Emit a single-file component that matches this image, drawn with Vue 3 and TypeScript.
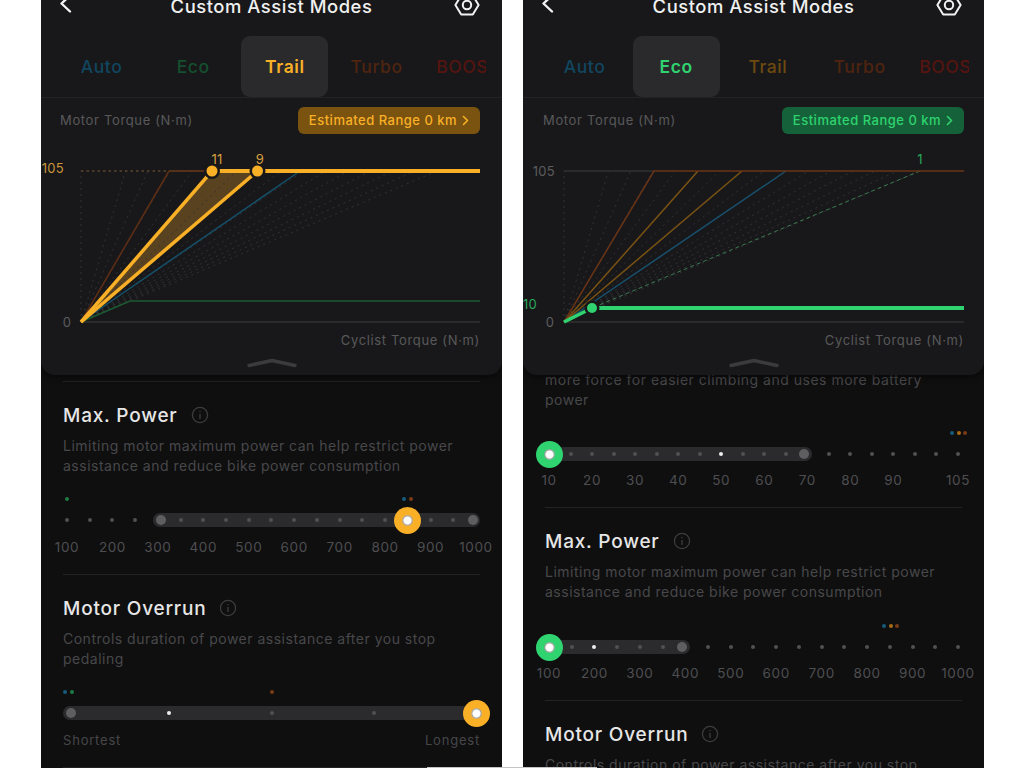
<script setup lang="ts">
interface Seg { d: string; color: string; w: number; dash?: string }
interface Label { t: string; x: number; y: number; color: string; anchor: string; size?: number }
interface Knob { x: number; y: number; r: number }
interface Marker { idx: number; off: number; color: string }
interface Tick { t: string; idx: number }
interface Slider {
  dots: number; a: number; b: number; thumb: number; white: number | null;
  markers: Marker[]; ticks?: Tick[]; ends?: [string, string];
}
interface Section { title?: string; desc: string[]; slider: Slider }
interface Phone {
  tab: number; accent: string; pillBg: string; fill: string; fillPts: string;
  segs: Seg[]; labels: Label[]; knobs: Knob[]; knobColor: string;
  origin: number; sections: Section[]; partial: boolean;
}

const BLUE = '#175a7c', GREEN = '#1f7a45', ORANGE = '#a86a14', RED = '#7a3a18'
const tabs = [
  { n: 'Auto', c: '#11465f' }, { n: 'Eco', c: '#14502f' }, { n: 'Trail', c: '#6e4a10' },
  { n: 'Turbo', c: '#4f2410' }, { n: 'BOOST', c: '#561410' },
]
const powerTicks: Tick[] = ['100', '200', '300', '400', '500', '600', '700', '800', '900', '1000'].map((t, i) => ({ t, idx: i * 2 }))
const torqueTicks: Tick[] = [
  ...['10', '20', '30', '40', '50', '60', '70', '80', '90'].map((t, i) => ({ t, idx: i * 2 })),
  { t: '105', idx: 19 },
]
const powerTitle = 'Max. Power'
const powerDesc = ['Limiting motor maximum power can help restrict power', 'assistance and reduce bike power consumption']
const overrunDesc = ['Controls duration of power assistance after you stop', 'pedaling']

const line = (x1: number, y1: number, x2: number, y2: number) => `M${x1} ${y1}L${x2} ${y2}`
const fan = (o: number): Seg[] =>
  Array.from({ length: 17 }, (_, k) => k)
    .filter((k) => k !== 1)
    .map((k) => ({ d: line(o, 322, o + 22.25 * k, 171), color: '#323234', w: 1, dash: '2 4' }))

const phones: Phone[] = [
  {
    tab: 2, accent: '#f9b027', pillBg: '#7a5310', fill: '#59421f', origin: 40,
    fillPts: '40,322 171,171 216.5,171', knobColor: '#f9b027', partial: false,
    segs: [
      ...fan(40),
      { d: line(40, 171, 128, 171), color: '#7a5a34', w: 1.2, dash: '2.5 3' },
      { d: line(128, 171, 171, 171), color: '#6a3a1a', w: 1.5 },
      { d: line(40, 322, 439, 322), color: '#303032', w: 1.5 },
      { d: line(40, 322, 128, 171), color: '#5e2e14', w: 1.5 },
      { d: line(40, 322, 259, 171), color: '#15506a', w: 1.5 },
      { d: 'M40 322L89 301L439 301', color: '#1c5a32', w: 1.5 },
      { d: line(40, 322, 171, 171), color: '#f9b027', w: 3.5 },
      { d: line(40, 322, 216.5, 171), color: '#f9b027', w: 3.5 },
      { d: line(171, 171, 439, 171), color: '#f9b027', w: 4 },
    ],
    knobs: [{ x: 171, y: 171, r: 5.5 }, { x: 216.5, y: 171, r: 5.5 }],
    labels: [
      { t: '105', x: 23, y: 168, color: '#c9963a', anchor: 'end' },
      { t: '0', x: 26, y: 322, color: '#5c5c5e', anchor: 'middle' },
      { t: '11', x: 176, y: 159, color: '#d8a040', anchor: 'middle' },
      { t: '9', x: 219, y: 159, color: '#d8a040', anchor: 'middle' },
    ],
    sections: [
      {
        title: powerTitle, desc: powerDesc,
        slider: {
          dots: 19, a: 4, b: 18, thumb: 15, white: null, ticks: powerTicks,
          markers: [{ idx: 0, off: 0, color: GREEN }, { idx: 15, off: -3.5, color: BLUE }, { idx: 15, off: 3.5, color: RED }],
        },
      },
      {
        title: 'Motor Overrun', desc: overrunDesc,
        slider: {
          dots: 5, a: 0, b: 4, thumb: 4, white: 1, ends: ['Shortest', 'Longest'],
          markers: [{ idx: 0, off: -2, color: BLUE }, { idx: 0, off: 5, color: GREEN }, { idx: 2, off: 0, color: RED }],
        },
      },
    ],
  },
  {
    tab: 1, accent: '#2fd36f', pillBg: '#15623a', fill: 'none', origin: 41,
    fillPts: '', knobColor: '#2fd36f', partial: true,
    segs: [
      ...fan(41),
      { d: line(41, 171, 131, 171), color: '#303032', w: 1.5 },
      { d: line(41, 322, 441, 322), color: '#303032', w: 1.5 },
      { d: line(397, 171, 69, 308), color: '#3a7a52', w: 1, dash: '4 3' },
      { d: line(41, 322, 263, 171), color: '#17506e', w: 1.5 },
      { d: line(41, 322, 219, 171), color: '#7a5212', w: 1.5 },
      { d: line(41, 322, 175, 171), color: '#7a5212', w: 1.5 },
      { d: 'M41 322L131 171L441 171', color: '#6a3316', w: 1.5 },
      { d: line(41, 322, 69, 308), color: '#2fd36f', w: 3.5 },
      { d: line(69, 308, 441, 308), color: '#2fd36f', w: 4 },
    ],
    knobs: [{ x: 69, y: 308, r: 5 }],
    labels: [
      { t: '105', x: 32, y: 171, color: '#5c5c5e', anchor: 'end' },
      { t: '0', x: 27, y: 322, color: '#5c5c5e', anchor: 'middle' },
      { t: '10', x: 7, y: 304, color: '#2aa85c', anchor: 'middle' },
      { t: '1', x: 397, y: 159, color: '#2aa85c', anchor: 'middle' },
    ],
    sections: [
      {
        desc: ['more force for easier climbing and uses more battery', 'power'],
        slider: {
          dots: 20, a: 0, b: 12, thumb: 0, white: 8, ticks: torqueTicks,
          markers: [{ idx: 19, off: -6, color: BLUE }, { idx: 19, off: 1, color: ORANGE }, { idx: 19, off: 7, color: RED }],
        },
      },
      {
        title: powerTitle, desc: powerDesc,
        slider: {
          dots: 19, a: 0, b: 6, thumb: 0, white: 2, ticks: powerTicks,
          markers: [{ idx: 15, off: -6, color: BLUE }, { idx: 15, off: 1, color: ORANGE }, { idx: 15, off: 7, color: RED }],
        },
      },
      {
        title: 'Motor Overrun', desc: overrunDesc,
        slider: {
          dots: 5, a: 0, b: 2, thumb: 0, white: 1, ends: ['Shortest', 'Longest'],
          markers: [],
        },
      },
    ],
  },
]

const SCALE = 409
const pos = (s: Slider, i: number) => (i / (s.dots - 1)) * SCALE
const trackStyle = (s: Slider) => ({ left: `${pos(s, s.a) - 4.5}px`, width: `${pos(s, s.b) - pos(s, s.a) + 9}px` })
const dotClass = (s: Slider, i: number) => ({
  white: i === s.white,
  hidden: i === s.thumb || ((i === s.a || i === s.b) && i !== s.white),
})
const capList = (s: Slider) => {
  const caps: number[] = []
  if (s.a !== s.thumb) caps.push(pos(s, s.a) + 3.5)
  if (s.b !== s.thumb) caps.push(pos(s, s.b) - 3.5)
  return caps
}
</script>

<template>
  <div class="page">
    <section v-for="(p, pi) in phones" :key="pi" class="phone" :class="{ second: pi === 1 }">
      <div class="panel">
        <header class="head">
          <svg class="back" width="16" height="20" viewBox="0 0 16 20">
            <path d="M12 1.5L3.5 9.5L12 17.5" fill="none" stroke="#f2f2f2" stroke-width="2.4" stroke-linecap="round" stroke-linejoin="round" />
          </svg>
          <h1 class="title">Custom Assist Modes</h1>
          <svg class="gear" width="28" height="24" viewBox="0 0 28 24">
            <path d="M8.2 2.5H19.8L25.6 12L19.8 21.5H8.2L2.4 12Z" fill="none" stroke="#f2f2f2" stroke-width="2" stroke-linejoin="round" />
            <circle cx="14" cy="12" r="4.2" fill="none" stroke="#f2f2f2" stroke-width="2" />
          </svg>
        </header>

        <nav class="tabs">
          <div class="tabs-inner">
            <div
              v-for="(t, ti) in tabs"
              :key="t.n"
              class="tab"
              :class="{ active: ti === p.tab }"
              :style="{ color: ti === p.tab ? p.accent : t.c }"
            >{{ t.n }}</div>
          </div>
        </nav>

        <div class="meta">
          <span class="axis-name">Motor Torque (N·m)</span>
          <button class="pill" :style="{ background: p.pillBg, color: p.accent }">
            <span>Estimated Range 0 km</span>
            <svg width="7" height="11" viewBox="0 0 7 11"><path d="M1.5 1.5L5.5 5.5L1.5 9.5" fill="none" stroke="currentColor" stroke-width="1.6" stroke-linecap="round" stroke-linejoin="round" /></svg>
          </button>
        </div>

        <svg class="chart" width="461" height="207" viewBox="0 143 461 207">
          <polygon v-if="p.fillPts" :points="p.fillPts" :fill="p.fill" />
          <path v-for="(s, si) in p.segs" :key="si" :d="s.d" fill="none" :stroke="s.color" :stroke-width="s.w" :stroke-dasharray="s.dash" />
          <g v-for="(k, ki) in p.knobs" :key="ki">
            <circle :cx="k.x" :cy="k.y" :r="k.r + 2.5" fill="#18181a" />
            <circle :cx="k.x" :cy="k.y" :r="k.r" :fill="p.knobColor" />
          </g>
          <text
            v-for="l in p.labels"
            :key="l.t"
            :x="l.x"
            :y="l.y + 4.5"
            :fill="l.color"
            :text-anchor="l.anchor"
            class="chart-num"
          >{{ l.t }}</text>
          <text :x="p.origin === 40 ? 439 : 441" y="344.5" text-anchor="end" class="chart-axis">Cyclist Torque (N·m)</text>
        </svg>

        <svg class="grip" width="50" height="10" viewBox="0 0 50 10">
          <path d="M2 7.5L25 2.5L48 7.5" fill="none" stroke="#3b3b3d" stroke-width="3.5" stroke-linecap="round" stroke-linejoin="round" />
        </svg>
      </div>

      <div class="scroller" :class="{ partial: p.partial }">
        <div v-for="(sec, si) in p.sections" :key="si" class="sect" :class="{ notitle: !sec.title }">
          <div v-if="sec.title" class="sect-head">
            <h2>{{ sec.title }}</h2>
            <svg width="18" height="18" viewBox="0 0 18 18">
              <circle cx="9" cy="9" r="7.6" fill="none" stroke="#3d3d3f" stroke-width="1.3" />
              <path d="M9 8V13M9 5V6.2" stroke="#3d3d3f" stroke-width="1.3" fill="none" />
            </svg>
          </div>
          <p class="desc"><span v-for="d in sec.desc" :key="d">{{ d }}</span></p>

          <div class="scale">
            <i
              v-for="(m, mi) in sec.slider.markers"
              :key="mi"
              class="marker"
              :style="{ left: `${pos(sec.slider, m.idx) + m.off}px`, background: m.color }"
            ></i>
            <div class="track" :style="trackStyle(sec.slider)"></div>
            <div class="dots">
              <i v-for="i in sec.slider.dots" :key="i" class="dot" :class="dotClass(sec.slider, i - 1)"></i>
            </div>
            <i v-for="c in capList(sec.slider)" :key="c" class="cap" :style="{ left: `${c}px` }"></i>
            <div
              class="thumb"
              :style="{ left: `${pos(sec.slider, sec.slider.thumb)}px`, '--accent': p.accent }"
            ></div>
          </div>

          <div v-if="sec.slider.ticks" class="ticks">
            <span
              v-for="t in sec.slider.ticks"
              :key="t.t"
              class="tick"
              :style="{ left: `${pos(sec.slider, t.idx)}px` }"
            >{{ t.t }}</span>
          </div>
          <div v-else class="ends">
            <span>{{ sec.slider.ends?.[0] }}</span>
            <span>{{ sec.slider.ends?.[1] }}</span>
          </div>
        </div>
      </div>
    </section>
    <div class="seam"></div>
  </div>
</template>

<style>
html, body { background: #fff; margin: 0; overflow: hidden; }
</style>

<style scoped>
.page {
  position: relative;
  display: flex;
  gap: 21px;
  padding-left: 41px;
  height: 768px;
  overflow: hidden;
  font-family: Inter, "Liberation Sans", sans-serif;
}
.seam {
  position: absolute;
  left: 427px;
  bottom: 0;
  width: 170px;
  height: 1px;
  background: #c4c4c4;
  z-index: 3;
}
.phone {
  width: 461px;
  height: 768px;
  flex: none;
  display: flex;
  flex-direction: column;
  overflow: hidden;
  background: #0f0f10;
}
.panel {
  position: relative;
  z-index: 2;
  height: 375px;
  flex: none;
  background: #18181a;
  border-radius: 0 0 14px 14px;
  box-shadow: 0 2px 6px rgba(0, 0, 0, 0.5);
}
.head {
  height: 12px;
  margin-bottom: 24px;
  padding: 0 19px;
  display: grid;
  grid-template-columns: 1fr auto 1fr;
  grid-template-rows: 12px;
  align-items: center;
}
.back { margin: -4px 0 0 -2px; }
.gear { margin: -3px 2px 0 0; justify-self: end; }
.title {
  margin: 0;
  font-size: 18.4px;
  font-weight: 500;
  letter-spacing: 0.55px;
  color: #f0f0f0;
  white-space: nowrap;
}
.tabs {
  height: 61px;
  padding-left: 17px;
  border-bottom: 1px solid #232325;
}
.second .tabs { padding-left: 18px; }
.tabs-inner {
  width: 428px;
  height: 61px;
  display: flex;
  gap: 4.7px;
  overflow: hidden;
}
.tab {
  flex: 0 0 87px;
  display: flex;
  align-items: center;
  justify-content: center;
  font-size: 17.5px;
  font-weight: 500;
  letter-spacing: 0.6px;
  border-radius: 9px;
  white-space: nowrap;
}
.tab.active {
  background: #2a2a2c;
  font-weight: 600;
}
.meta {
  height: 45px;
  padding: 0 22px 0 19px;
  display: flex;
  align-items: center;
  justify-content: space-between;
}
.second .meta { padding: 0 20px 0 20px; }
.axis-name, .chart-axis {
  font-size: 13px;
  letter-spacing: 0.65px;
  color: #58585a;
  fill: #58585a;
}
.axis-name { margin-top: -2px; }
.pill {
  height: 27px;
  width: 182px;
  border: 0;
  border-radius: 6px;
  display: flex;
  align-items: center;
  justify-content: center;
  gap: 5px;
  padding: 0 0 1px;
  font: 500 13px Inter, "Liberation Sans", sans-serif;
  letter-spacing: 0.5px;
}
.chart { display: block; }
.chart-num { font-size: 13px; letter-spacing: 0.3px; }
.grip {
  display: block;
  margin: 8px auto 0;
}
.scroller {
  flex: 1;
  min-height: 0;
  overflow: hidden;
  padding-top: 6px;
}
.scroller.partial { padding-top: 0; }
.sect {
  margin: 0 22px;
  height: 193px;
  box-sizing: border-box;
  border-top: 1px solid #232325;
  padding-top: 21px;
}
.sect:last-child {
  height: 194px;
  border-bottom: 1px solid #232325;
}
.sect.notitle {
  border-top: 0;
  padding-top: 0;
  margin-top: -5px;
  height: 137px;
}
.sect.notitle .desc { margin-top: 0; }
.sect-head {
  height: 24px;
  display: flex;
  align-items: center;
  gap: 13px;
}
.sect-head h2 {
  margin: 0;
  font-size: 19px;
  font-weight: 500;
  letter-spacing: 0.8px;
  color: #e6e6e6;
}
.desc {
  margin: 9px 0 0;
  display: flex;
  flex-direction: column;
  font-size: 14px;
  line-height: 20px;
  letter-spacing: 0.5px;
  color: #48484a;
  white-space: nowrap;
}
.scale {
  position: relative;
  height: 27px;
  margin: 30.5px 4px 0;
}
.second .scale { margin-top: 31.5px; }
.second .notitle .scale { margin-top: 30.5px; }
.track {
  position: absolute;
  top: 6.5px;
  height: 14px;
  border-radius: 7px;
  background: #2b2b2d;
}
.dots {
  position: absolute;
  inset: 0 -2px;
  display: flex;
  align-items: center;
  justify-content: space-between;
}
.dot {
  width: 4px;
  height: 4px;
  border-radius: 50%;
  background: #515153;
}
.dot.white { background: #ececec; }
.dot.hidden { visibility: hidden; }
.cap {
  position: absolute;
  top: 8.5px;
  width: 10px;
  height: 10px;
  margin-left: -5px;
  border-radius: 50%;
  background: #5e5e60;
}
.marker {
  position: absolute;
  top: -10px;
  width: 4px;
  height: 4px;
  margin-left: -2px;
  border-radius: 50%;
}
.thumb {
  position: absolute;
  top: 0;
  width: 27px;
  height: 27px;
  margin-left: -13.5px;
  border-radius: 50%;
  background: radial-gradient(circle, #fff 0 3.5px, rgba(255, 255, 255, 0.6) 4.5px, var(--accent) 6px);
}
.ticks {
  position: relative;
  height: 16px;
  margin: 5.5px 4px 0;
}
.second .ticks { margin-top: 4.5px; }
.tick {
  position: absolute;
  top: 0;
  transform: translateX(-50%);
  font-size: 13.5px;
  line-height: 16px;
  letter-spacing: 0.6px;
  color: #4e4e50;
}
.ends {
  height: 16px;
  margin-top: 5.5px;
  display: flex;
  justify-content: space-between;
  font-size: 13px;
  line-height: 16px;
  letter-spacing: 0.8px;
  color: #464648;
}
</style>
